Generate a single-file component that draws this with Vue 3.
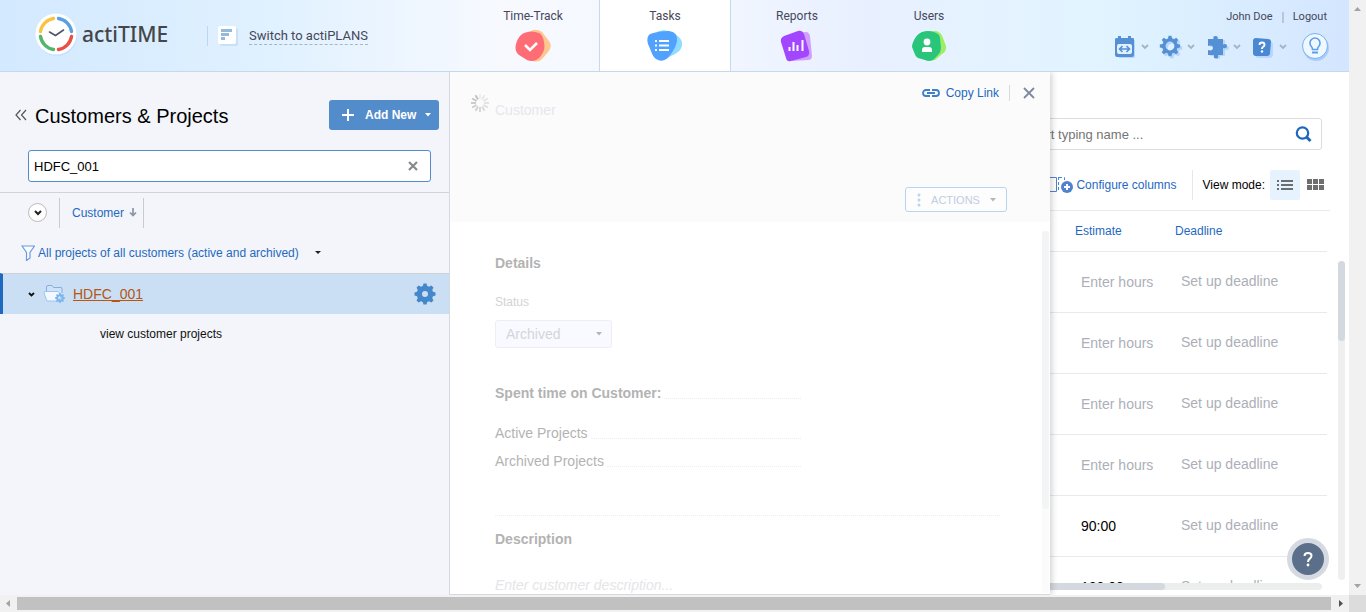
<script setup>
import { ref } from 'vue'

const query = ref('HDFC_001')
const taskQuery = ref('')
const status = ref('Archived')

const tasks = [
  { estimate: '' },
  { estimate: '' },
  { estimate: '' },
  { estimate: '' },
  { estimate: '90:00' },
  { estimate: '120:00' }
]

const spokes = Array.from({ length: 12 }, (_, i) => ({
  angle: i * 30,
  opacity: 0.12 + i * 0.035
}))

function gear(cx, cy, outer, inner, hole) {
  const pts = []
  const steps = [[-0.27, inner], [-0.14, outer], [0.14, outer], [0.27, inner]]
  for (let i = 0; i < 8; i++) {
    for (const [d, r] of steps) {
      const a = (i * Math.PI) / 4 + d
      pts.push(`${(cx + r * Math.cos(a)).toFixed(2)} ${(cy + r * Math.sin(a)).toFixed(2)}`)
    }
  }
  return `M${pts.join('L')}Z M${cx + hole} ${cy}a${hole} ${hole} 0 1 0 ${-2 * hole} 0a${hole} ${hole} 0 1 0 ${2 * hole} 0Z`
}
</script>

<template>
  <div class="window">
    <div class="page">
      <header class="topbar">
        <div class="brand">
          <a class="logo" href="#">
            <svg width="44" height="44" viewBox="0 0 44 44" aria-hidden="true">
              <circle cx="23" cy="24" r="20" fill="#c9e0ff" />
              <circle cx="22" cy="22" r="20.500" fill="#fff" />
              <g fill="none" stroke-width="3.400" stroke-linecap="round">
                <path d="M6.500 19.500A15.700 15.700 0 0 1 19.500 6.500" stroke="#f9c440" />
                <path d="M24.500 6.500A15.700 15.700 0 0 1 37.500 19.500" stroke="#5aa0de" />
                <path d="M37.500 24.500A15.700 15.700 0 0 1 24.500 37.500" stroke="#ea5045" />
                <path d="M19.500 37.500A15.700 15.700 0 0 1 6.500 24.500" stroke="#52b66a" />
              </g>
              <path d="M15.500 20L21.500 23.500L29.500 18" fill="none" stroke="#50546a" stroke-width="1.600" stroke-linecap="round" />
            </svg>
            <span>actiTIME</span>
          </a>
          <a class="switch" href="#">
            <svg width="20" height="20" viewBox="0 0 20 20" aria-hidden="true">
              <rect x="2" y="2" width="18" height="18" rx="2" fill="#c9e0fb" />
              <rect width="18" height="18" rx="2" fill="#fff" />
              <path d="M3 4.500h11M3 8.500h8M3 12.500h4" stroke="#93badd" stroke-width="3" />
            </svg>
            <span>Switch to actiPLANS</span>
          </a>
        </div>

        <nav class="tabs">
          <a class="tab" href="#">
            <span>Time-Track</span>
            <svg width="40" height="34" viewBox="0 0 40 34" aria-hidden="true">
              <path d="M18 2Q23-1 29 3L36 12Q40 17 35 23L30 29Q26 34 20 32Q12 30 10 17Q10 6 18 2Z" fill="#ffc68f" />
              <path d="M11 4Q18 1 26 4Q30 6 31 13Q33 21 27 28Q21 34 14 31L6 26Q1 22 3 15Q5 7 11 4Z" fill="#fe6c75" />
              <path d="M12 16l5 5l7-7" fill="none" stroke="#fff" stroke-width="2.600" />
            </svg>
          </a>
          <a class="tab active" href="#">
            <span>Tasks</span>
            <svg width="40" height="34" viewBox="0 0 40 34" aria-hidden="true">
              <path d="M12 3Q20-1 28 4Q38 9 37 16Q37 21 30 25L20 30Z" fill="#8edcff" />
              <path d="M5 5Q13 2 24 2Q33 3 32 12Q31 18 26 25Q20 34 13 31Q8 29 6 22L3 15Q1 8 5 5Z" fill="#51a2ff" />
              <path d="M10 12h2m2 0h10M10 16.500h2m2 0h10M10 21h2m2 0h10" stroke="#fff" stroke-width="2" />
            </svg>
          </a>
          <a class="tab" href="#">
            <span>Reports</span>
            <svg width="40" height="34" viewBox="-1 -1 40 34" aria-hidden="true">
              <path d="M14 4Q15 2 18 3L28 2Q31 2 32 6L34 26Q34 30 30 30L14 31Z" fill="#d1a0ff" />
              <path d="M6 6L20 1Q24 0 26 4L31 21Q32 26 28 27L13 31Q9 32 8 28L3 12Q2 8 6 6Z" fill="#a346ff" />
              <path d="M11.500 21v-4M15.500 21v-9M19.500 21v-6M24.500 21v-11" stroke="#fff" stroke-width="2" />
            </svg>
          </a>
          <a class="tab" href="#">
            <span>Users</span>
            <svg width="40" height="34" viewBox="0 0 40 34" aria-hidden="true">
              <path d="M15 3L27 2Q32 3 34 9L37 17Q38 22 33 25L26 31Q20 32 17 28Z" fill="#9aef64" />
              <path d="M13 3Q19 1 25 3Q31 5 31 9L32 19Q32 23 29 26L24 31Q20 33 16 31L9 29Q6 27 5 23L3 18Q3 15 5 11Q8 5 13 3Z" fill="#29c57b" />
              <circle cx="18" cy="13" r="3.400" fill="#fff" />
              <path d="M13 23v-2q0-3 3-3h4q3 0 3 3v2z" fill="#fff" />
            </svg>
          </a>
        </nav>

        <div class="account">
          <div class="session">
            <a href="#">John Doe</a>
            <span class="pipe"></span>
            <a href="#">Logout</a>
          </div>
          <div class="tools">
            <button class="tool" aria-label="Calendar">
              <svg width="24" height="24" viewBox="0 0 24 24" aria-hidden="true">
                <path d="M4 5h18v17q0 1-2 1H6z" fill="#b6d6fb" />
                <path d="M4 3h1V1h3v2h7V1h3v2h2q1 0 1 1v16q0 2-2 2H4q-2 0-2-2V4q0-1 2-1z" fill="#5590d5" />
                <rect x="4" y="9" width="15" height="10" rx="2" fill="#e2f1ff" />
                <path d="M9.500 11L6.500 14l3 3M13.500 11l3 3l-3 3M7 14h9" fill="none" stroke="#5590d5" stroke-width="1.600" />
              </svg>
              <svg class="chev" width="8" height="6" viewBox="0 0 8 6" aria-hidden="true"><path d="M1 1l3 3l3-3" /></svg>
            </button>
            <button class="tool" aria-label="Settings">
              <svg width="24" height="24" viewBox="0 0 24 24" aria-hidden="true">
                <path :d="gear(13, 13, 10.5, 7.7, 4.4)" fill="#b6d6fb" fill-rule="evenodd" />
                <path :d="gear(11, 11, 10.3, 7.7, 4.4)" fill="#5590d5" fill-rule="evenodd" />
              </svg>
              <svg class="chev" width="8" height="6" viewBox="0 0 8 6" aria-hidden="true"><path d="M1 1l3 3l3-3" /></svg>
            </button>
            <button class="tool" aria-label="Integrations">
              <svg width="24" height="24" viewBox="0 0 24 24" aria-hidden="true">
                <path d="M5 5h5q0-3 2-3t2 3h6v6q4-1 4 2t-4 2v6h-5q1 3-2 3t-2-3H5v-5q4 1 4-2t-4-2z" fill="#b6d6fb" />
                <path d="M3 4h5.500q-1-3 2-3t2 3H18v5.500q4-1.500 4 1.500t-4 2V20h-5q1 3.500-2 3.500T9 20H3v-5q5 1.500 5-2t-5-2z" fill="#5590d5" />
              </svg>
              <svg class="chev" width="8" height="6" viewBox="0 0 8 6" aria-hidden="true"><path d="M1 1l3 3l3-3" /></svg>
            </button>
            <button class="tool" aria-label="Help">
              <svg width="24" height="24" viewBox="0 0 24 24" aria-hidden="true">
                <rect x="4" y="6" width="18" height="17" rx="4" fill="#b6d6fb" />
                <path d="M5 3L17 4Q20 4 20 7L19 18Q19 21 16 21L5 21Q2 21 2 18L2 6Q2 3 5 3Z" fill="#4a88d2" />
                <path d="M8.500 10q0-2.500 2.500-2.500t2.500 2.200q0 1.300-1.300 2.100t-1.200 2.200" fill="none" stroke="#fff" stroke-width="1.900" />
                <circle cx="11" cy="16.500" r="1.200" fill="#fff" />
              </svg>
              <svg class="chev" width="8" height="6" viewBox="0 0 8 6" aria-hidden="true"><path d="M1 1l3 3l3-3" /></svg>
            </button>
            <button class="tool tips" aria-label="Tips">
              <svg width="28" height="30" viewBox="1 1 28 30" aria-hidden="true">
                <circle cx="16" cy="17" r="13" fill="#a9cdfb" />
                <circle cx="15" cy="15" r="12.500" fill="#f0f8ff" stroke="#79b0f0" />
                <path d="M12.500 18.500q0-2-1.500-3.500q-1-1.200-1-3a5 5 0 0 1 10 0q0 1.800-1 3q-1.500 1.500-1.500 3.500z" fill="none" stroke="#5c9eee" stroke-width="1.600" />
                <path d="M12 21.500h6" stroke="#5c9eee" stroke-width="2" />
              </svg>
            </button>
          </div>
        </div>
      </header>

      <main class="workspace">
        <aside class="customers">
          <div class="customers-head">
            <button class="collapse" aria-label="Collapse">
              <svg width="12" height="12" viewBox="0 0 12 12" aria-hidden="true"><path d="M5.500 1L1 6l4.500 5M11 1L6.500 6L11 11" fill="none" stroke="#555" stroke-width="1.200" /></svg>
            </button>
            <h1>Customers &amp; Projects</h1>
            <button class="add">
              <svg width="12" height="12" viewBox="0 0 12 12" aria-hidden="true"><path d="M6 0v12M0 6h12" stroke="#fff" stroke-width="2" /></svg>
              <span>Add New</span>
              <svg width="6" height="4" viewBox="0 0 6 4" aria-hidden="true"><path d="M0 0h6L3 3.500z" fill="#fff" /></svg>
            </button>
          </div>

          <div class="filter-box">
            <input v-model="query" type="text" aria-label="Find customer or project" />
            <button aria-label="Clear" @click="query = ''">
              <svg width="10" height="10" viewBox="0 0 10 10" aria-hidden="true"><path d="M1 1l8 8M9 1L1 9" stroke="#85898e" stroke-width="2.200" /></svg>
            </button>
          </div>

          <div class="sort-row">
            <button class="expand" aria-label="Expand all">
              <svg width="8" height="6" viewBox="0 0 8 6" aria-hidden="true"><path d="M1 1l3 3l3-3" fill="none" stroke="#222" stroke-width="2" /></svg>
            </button>
            <a class="sort" href="#">
              Customer
              <svg width="8" height="9" viewBox="0 0 8 9" aria-hidden="true"><path d="M4 0v8M1 4.500l3 3l3-3" fill="none" stroke="#8b95a8" stroke-width="1.700" /></svg>
            </a>
          </div>

          <button class="scope">
            <svg width="14" height="16" viewBox="0 0 14 16" aria-hidden="true"><path d="M1 1h12.500L9 7.500V13l-3.500 2.500v-8z" fill="#f8fbff" stroke="#6b9bdd" stroke-width="1.200" /></svg>
            <span>All projects of all customers (active and archived)</span>
            <svg class="scope-caret" width="6" height="4" viewBox="0 0 6 4" aria-hidden="true"><path d="M0 0h6L3 3z" fill="#222" /></svg>
          </button>

          <div class="customer selected">
            <svg width="7" height="5" viewBox="0 0 7 5" aria-hidden="true"><path d="M1 1l2.500 2.500L6 1" fill="none" stroke="#111" stroke-width="1.800" /></svg>
            <svg class="folder" width="22" height="20" viewBox="0 0 22 20" aria-hidden="true">
              <path d="M3.500 7V3q0-1.500 1.500-1.500h4l1.500 2H18q1 0 1 1.500v4" fill="#cfe2f8" stroke="#82aee5" />
              <path d="M2 7.500h13l3 4l-2 5.500H5Q4 17 3.500 16L1 9Q1 7.500 2 7.500z" fill="#f2f8ff" stroke="#9fc4ee" />
              <path :d="gear(17, 14, 5, 3.8, 1.7)" fill="#7cb4ef" fill-rule="evenodd" />
            </svg>
            <a href="#">HDFC_001</a>
            <button aria-label="Customer settings">
              <svg width="22" height="22" viewBox="0 0 22 22" aria-hidden="true"><path :d="gear(11, 11, 10.6, 8.3, 3)" fill="#4587cb" fill-rule="evenodd" /></svg>
            </button>
          </div>
          <a class="view-projects" href="#">view customer projects</a>
        </aside>

        <section class="tasks">
          <label class="task-search">
            <input v-model="taskQuery" type="text" placeholder="Start typing name ..." aria-label="Search tasks" />
            <svg width="17" height="17" viewBox="0 0 17 17" aria-hidden="true"><circle cx="7.500" cy="7" r="5.700" fill="none" stroke="#1d66bd" stroke-width="2.200" /><path d="M11.500 11l4 4" stroke="#1d66bd" stroke-width="3" /></svg>
          </label>

          <div class="toolbar">
            <button class="configure">
              <svg width="30" height="18" viewBox="0 0 30 18" aria-hidden="true">
                <path d="M1 1.500h12.500v14H1z" fill="#fff" stroke="#5182d0" />
                <path d="M15.500 1v15M16 1.500h5.500V15" fill="none" stroke="#5182d0" stroke-dasharray="3 2" />
                <circle cx="24" cy="11" r="6" fill="#5182d0" />
                <path d="M24 8v6M21 11h6" stroke="#fff" stroke-width="2" />
              </svg>
              <span>Configure columns</span>
            </button>
            <div class="mode">
              <span>View mode:</span>
              <button class="on" aria-label="List">
                <svg width="16" height="10" viewBox="0 0 16 10" aria-hidden="true"><path d="M0 1h2m2 0h12M0 5h2m2 0h12M0 9h2m2 0h12" stroke="#6a6e72" stroke-width="2" /></svg>
              </button>
              <button aria-label="Board">
                <svg width="17" height="11" viewBox="0 0 17 11" aria-hidden="true"><path d="M0 0h5v5H0zM6 0h5v5H6zM12 0h5v5h-5zM0 6h5v5H0zM6 6h5v5H6zM12 6h5v5h-5z" fill="#6e6e6e" /></svg>
              </button>
            </div>
          </div>

          <div class="table-area">
            <table>
              <thead>
                <tr>
                  <th class="name"></th>
                  <th class="estimate"><a href="#">Estimate</a></th>
                  <th class="deadline"><a href="#">Deadline</a></th>
                </tr>
              </thead>
              <tbody>
                <tr v-for="(task, i) in tasks" :key="i">
                  <td></td>
                  <td :class="{ empty: !task.estimate }">{{ task.estimate || 'Enter hours' }}</td>
                  <td class="empty due">Set up deadline</td>
                </tr>
              </tbody>
            </table>
          </div>
          <div class="x-track"><div class="x-thumb"></div></div>
          <div class="y-track"><div class="y-thumb"></div></div>

          <section class="panel">
            <div class="panel-head">
              <svg class="spinner" width="20" height="20" viewBox="0 0 20 20" aria-hidden="true">
                <g stroke="#888" stroke-width="1.800">
                  <path v-for="s in spokes" :key="s.angle" d="M10 1v5" :transform="`rotate(${s.angle} 10 10)`" :opacity="s.opacity" />
                </g>
              </svg>
              <span class="kind">Customer</span>
              <div class="panel-side">
                <div class="panel-links">
                  <a href="#">
                    <svg width="18" height="8" viewBox="0 0 18 8" aria-hidden="true"><path d="M8 1H4a3 3 0 0 0 0 6h4M10 1h4a3 3 0 0 1 0 6h-4M5 4h8" fill="none" stroke="#3d81cb" stroke-width="1.800" /></svg>
                    Copy Link
                  </a>
                  <button class="close" aria-label="Close">
                    <svg width="12" height="12" viewBox="0 0 12 12" aria-hidden="true"><path d="M1 1l10 10M11 1L1 11" stroke="#7e89a0" stroke-width="1.800" /></svg>
                  </button>
                </div>
                <button class="actions">
                  <svg width="4" height="14" viewBox="0 0 4 14" aria-hidden="true"><g fill="#b9d4f0"><circle cx="2" cy="2" r="1.500" /><circle cx="2" cy="7" r="1.500" /><circle cx="2" cy="12" r="1.500" /></g></svg>
                  <span>ACTIONS</span>
                  <svg width="6" height="4" viewBox="0 0 6 4" aria-hidden="true"><path d="M0 0h6L3 3.500z" fill="#b5b5b5" /></svg>
                </button>
              </div>
            </div>

            <div class="panel-body">
              <h2>Details</h2>
              <label class="status-label" for="status">Status</label>
              <div class="status">
                <select id="status" v-model="status">
                  <option>Archived</option>
                  <option>Active</option>
                </select>
                <svg width="6" height="4" viewBox="0 0 6 4" aria-hidden="true"><path d="M0 0h6L3 3.500z" fill="#b5b5b5" /></svg>
              </div>
              <div class="spent">
                <h2 class="leader">Spent time on Customer:</h2>
                <div class="leader">Active Projects</div>
                <div class="leader">Archived Projects</div>
              </div>
              <div class="description">
                <h2>Description</h2>
                <p>Enter customer description...</p>
              </div>
              <div class="panel-track"><div class="panel-thumb"></div></div>
            </div>
          </section>

          <button class="help" aria-label="Support">
            <svg width="12" height="18" viewBox="0 0 12 18" aria-hidden="true">
              <path d="M2.500 6Q2.500 3 6 3t3.500 2.700q0 1.600-1.700 2.900T6 12" fill="none" stroke="#fff" stroke-width="2" />
              <circle cx="6" cy="15" r="1.400" fill="#fff" />
            </svg>
          </button>
        </section>
      </main>
    </div>

    <div class="win-y">
      <svg width="7" height="4" viewBox="0 0 7 4" aria-hidden="true"><path d="M0 4h7L3.500 0z" fill="#a3a3a3" /></svg>
      <svg width="7" height="4" viewBox="0 0 7 4" aria-hidden="true"><path d="M0 0h7L3.500 4z" fill="#a3a3a3" /></svg>
    </div>
    <div class="win-x">
      <svg width="17" height="7" viewBox="0 0 17 7" aria-hidden="true"><path d="M10 0v7L6 3.500z" fill="#a3a3a3" /></svg>
      <div class="win-thumb"></div>
      <svg width="18" height="7" viewBox="0 0 18 7" aria-hidden="true"><path d="M8 0v7l4-3.500z" fill="#505050" /></svg>
    </div>
    <div class="win-corner"></div>
  </div>
</template>

<style>
body {
  margin: 0;
}
</style>

<style scoped>
.window {
  display: grid;
  grid-template-columns: minmax(0, 1fr) 17px;
  grid-template-rows: minmax(0, 1fr) 17px;
  height: 100vh;
  font-family: "Liberation Sans", Arial, sans-serif;
  font-size: 12px;
  color: #000;
  overflow: hidden;
}
.window *,
.window *::after {
  box-sizing: border-box;
}
svg {
  display: block;
  flex: none;
}
a {
  color: #1f69bf;
  text-decoration: none;
}
button {
  display: flex;
  align-items: center;
  margin: 0;
  padding: 0;
  border: 0;
  background: none;
  color: inherit;
  font: inherit;
  white-space: nowrap;
}
h1,
h2,
p {
  margin: 0;
}
input {
  min-width: 0;
  border: 0;
  outline: 0;
  padding: 0;
  background: none;
  font: inherit;
}

.page {
  display: flex;
  flex-direction: column;
  min-width: 0;
}
.topbar {
  display: flex;
  height: 72px;
  flex: none;
  border-bottom: 1px solid #c5d9ec;
  background: linear-gradient(90deg, #d3e9ff 0%, #e0f1ff 20%, #f7f9ff 37%, #f4f8ff 50%, #e9f0ff 63%, #e1f4ff 81%, #d4e6ff 100%);
  font-family: Roboto, sans-serif;
}
.topbar a {
  color: #45475a;
}
.brand {
  display: flex;
  flex: none;
  width: 467px;
  padding-left: 34px;
}
.logo {
  display: flex;
  align-items: center;
  gap: 4px;
  width: 173px;
  height: 67px;
  font-family: "Noto Sans", sans-serif;
  font-size: 21px;
  font-weight: 500;
}
.topbar .logo {
  color: #44464a;
}
.switch {
  display: flex;
  align-items: center;
  gap: 11px;
  height: 20px;
  margin-top: 26px;
  padding-left: 10px;
  border-left: 1px solid #bad8f5;
  font-size: 13px;
}
.switch span {
  line-height: 16px;
  border-bottom: 1px dashed #a5b6c9;
}
.tabs {
  display: flex;
}
.tab {
  display: flex;
  flex-direction: column;
  align-items: center;
  gap: 5px;
  width: 132px;
  height: 71px;
  padding-top: 8px;
  font-size: 12px;
  line-height: 16px;
}
.tab.active {
  background: #fff;
  border: solid #c5d9ec;
  border-width: 0 1px;
}
.account {
  display: flex;
  flex-direction: column;
  align-items: flex-end;
  margin-left: auto;
  padding: 9px 20px 0 0;
}
.session {
  display: flex;
  align-items: center;
  gap: 9px;
  padding-right: 2px;
  font-size: 11px;
  line-height: 16px;
}
.pipe {
  width: 2px;
  height: 11px;
  background: #b9c6da;
}
.tools {
  display: flex;
  align-items: center;
  gap: 10px;
  margin-top: 7px;
}
.tool {
  gap: 4px;
}
.tips {
  margin-left: 4px;
}
.chev path {
  fill: none;
  stroke: #a3b4c8;
  stroke-width: 1.8px;
}

.workspace {
  display: flex;
  flex: 1;
  min-height: 0;
}
.customers {
  display: flex;
  flex-direction: column;
  flex: none;
  width: 450px;
  border-right: 1px solid #d5d9e0;
  background: #f3f5fa;
}
.customers-head {
  display: flex;
  align-items: center;
  padding: 28px 10px 20px 15px;
}
.customers-head h1 {
  margin-left: 8px;
  padding-top: 2px;
  font-size: 20px;
  font-weight: 400;
}
.add {
  gap: 10px;
  width: 110px;
  height: 30px;
  margin-left: auto;
  padding: 0 8px 0 13px;
  border-radius: 3px;
  background: #528cca;
  color: #fff;
  font-weight: 700;
}
.add svg:last-child {
  margin-left: auto;
}
.add {
  gap: 0;
}
.add span {
  margin-left: 11px;
}
.filter-box {
  display: flex;
  align-items: center;
  height: 32px;
  margin: 0 18px 10px 28px;
  padding: 0 12px 0 5px;
  border: 1px solid #528cca;
  border-radius: 3px;
  background: #fff;
  font-size: 13px;
}
.filter-box input {
  flex: 1;
}
.sort-row {
  display: flex;
  align-items: center;
  height: 40px;
  padding-left: 28px;
  border-top: 1px solid #d0d3d8;
}
.expand {
  justify-content: center;
  width: 19px;
  height: 19px;
  margin-right: 12px;
  border: 1px solid #bbb;
  border-radius: 50%;
  background: #fff;
}
.sort {
  display: flex;
  align-items: center;
  gap: 5px;
  height: 30px;
  padding: 0 6px 0 12px;
  border: solid #c9cbd0;
  border-width: 0 1px;
}
.scope {
  height: 41px;
  padding-left: 21px;
  gap: 3px;
  color: #1f69bf;
}
.scope-caret {
  margin-left: 13px;
}
.customer {
  display: flex;
  align-items: center;
  height: 41px;
  padding: 0 13px 0 25px;
  border-top: 1px solid #cdd0d4;
  border-left: 3px solid #1f69c1;
  background: #cadff4;
}
.folder {
  margin: 0 8px;
}
.customer a {
  color: #b55612;
  font-size: 14px;
  text-decoration: underline;
}
.customer button {
  margin-left: auto;
}
.view-projects {
  padding: 12px 0 0 100px;
  line-height: 16px;
  color: #111;
}

.tasks {
  position: relative;
  display: flex;
  flex-direction: column;
  flex: 1;
  min-width: 0;
  padding-top: 46px;
  background: #fff;
}
.task-search {
  display: flex;
  align-items: center;
  align-self: flex-end;
  flex: none;
  width: 312px;
  height: 32px;
  margin-right: 27px;
  padding: 0 9px 0 16px;
  border: 1px solid #ddd;
  border-radius: 3px;
  font-size: 13px;
}
.task-search input {
  flex: 1;
}
.task-search input::placeholder {
  color: #757575;
  opacity: 1;
}
.toolbar {
  display: flex;
  align-items: center;
  justify-content: flex-end;
  flex: none;
  height: 61px;
  margin-right: 19px;
  padding-top: 9px;
  border-bottom: 1px solid #eaebec;
}
.configure {
  gap: 3px;
  margin-right: 15px;
  color: #1f69bf;
}
.mode {
  display: flex;
  align-items: center;
  height: 30px;
  padding-left: 10px;
  border-left: 1px solid #e7e7e7;
}
.mode span {
  margin-right: 5px;
}
.mode button {
  justify-content: center;
  width: 30px;
  height: 30px;
}
.mode .on {
  border-radius: 2px;
  background: #e6f3ff;
}
.table-area {
  flex: 1;
  min-height: 0;
  margin-right: 22px;
  overflow: hidden;
}
table {
  width: 100%;
  table-layout: fixed;
  border-collapse: separate;
  border-spacing: 0;
}
th {
  height: 41px;
  padding: 0;
  border-bottom: 1px solid #e8e9ea;
  font-size: 12px;
  font-weight: 400;
  text-align: left;
}
.estimate {
  width: 100px;
}
.deadline {
  width: 152px;
}
td {
  height: 61px;
  padding: 0 6px;
  border-bottom: 1px solid #e8e9ea;
  font-size: 14px;
}
td.empty {
  color: #acafb8;
}
td.due {
  padding-bottom: 2px;
}
.x-track {
  flex: none;
  height: 7px;
  margin: 0 27px 5px 0;
  border-radius: 4px;
  background: #eceded;
}
.x-thumb {
  width: 82%;
  height: 7px;
  border-radius: 4px;
  background: #d3d9de;
}
.y-track {
  position: absolute;
  top: 189px;
  right: 4px;
  bottom: 15px;
  width: 7px;
  border-radius: 4px;
  background: #efefef;
}
.y-thumb {
  height: 80px;
  border-radius: 4px;
  background: #d3d9de;
}

.panel {
  position: absolute;
  inset: 0 auto 0 0;
  display: flex;
  flex-direction: column;
  width: 600px;
  border-bottom: 1px solid #d5d9e0;
  background: #fff;
  box-shadow: 2px 0 6px rgba(0, 0, 0, 0.18);
  clip-path: inset(0 -10px 0 0);
}
.panel-head {
  display: flex;
  align-items: flex-start;
  flex: none;
  height: 150px;
  padding: 11px 15px 0 20px;
  background: #fbfbfb;
}
.spinner {
  margin-top: 10px;
}
.kind {
  margin: 19px 0 0 5px;
  color: #e5e7ec;
  font-size: 14px;
  line-height: 16px;
}
.panel-side {
  display: flex;
  flex-direction: column;
  align-items: flex-end;
  margin-left: auto;
}
.panel-links {
  display: flex;
  align-items: center;
  height: 20px;
}
.panel-links a {
  display: flex;
  align-items: center;
  gap: 6px;
}
.close {
  height: 16px;
  margin-left: 10px;
  padding-left: 13px;
  border-left: 1px solid #d5d9e0;
}
.actions {
  gap: 10px;
  width: 102px;
  height: 25px;
  margin: 84px 28px 0 0;
  padding: 0 10px 0 11px;
  border: 1px solid #b9d4f0;
  border-radius: 3px;
  background: #fdfdfe;
  color: #c1cde0;
  font-size: 11px;
}
.actions span {
  flex: 1;
}
.panel-body {
  position: relative;
  display: flex;
  flex-direction: column;
  align-items: flex-start;
  flex: 1;
  min-height: 0;
  padding: 33px 50px 0 45px;
  color: #b3b3b3;
  font-size: 14px;
  line-height: 16px;
  overflow: hidden;
}
.panel-body h2 {
  font-size: 14px;
  line-height: 16px;
}
.status-label {
  margin: 23px 0 10px;
  color: #d2d3d5;
  font-size: 12px;
}
.status {
  display: grid;
  align-items: center;
  width: 117px;
  height: 28px;
}
.status > * {
  grid-area: 1 / 1;
}
.status svg {
  justify-self: end;
  margin-right: 10px;
  pointer-events: none;
}
.status select {
  width: 100%;
  height: 28px;
  padding: 0 10px;
  border: 1px solid #ededf3;
  border-radius: 3px;
  background: #f9faff;
  color: #d3d5d9;
  font: inherit;
  appearance: none;
}
.spent {
  width: 306px;
  margin-top: 37px;
}
.leader {
  display: flex;
  gap: 3px;
  margin-bottom: 12px;
}
.leader::after {
  content: "";
  flex: 1;
  height: 14px;
  border-bottom: 1px dotted #eee;
}
h2.leader {
  margin-bottom: 24px;
}
.description {
  align-self: stretch;
  margin-top: 34px;
  padding-top: 15px;
  border-top: 1px dotted #eee;
}
.description p {
  margin-top: 30px;
  color: #e5e5e8;
  font-style: italic;
}
.panel-track {
  position: absolute;
  top: 9px;
  right: 1px;
  bottom: 1px;
  width: 7px;
  border-radius: 4px;
  background: #fbfbfb;
}
.panel-thumb {
  height: 278px;
  border-radius: 4px;
  background: #f3f4f6;
}
.help {
  position: absolute;
  right: 20px;
  bottom: 15px;
  justify-content: center;
  width: 42px;
  height: 42px;
  border: 5px solid #d5dae2;
  border-radius: 50%;
  background: #5c6f8a;
}

.win-y {
  display: flex;
  flex-direction: column;
  align-items: center;
  justify-content: space-between;
  padding: 7px 0;
  background: #f1f1f1;
}
.win-x {
  display: flex;
  align-items: center;
  background: #f1f1f1;
}
.win-thumb {
  flex: 1;
  height: 13px;
  background: #c1c1c1;
}
.win-corner {
  background: #dcdcdc;
}
</style>
